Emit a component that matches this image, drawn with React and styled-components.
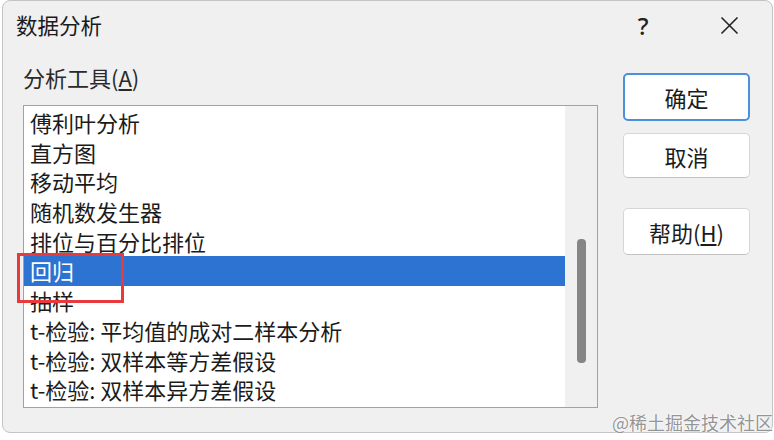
import React from 'react';
import styled, { createGlobalStyle } from 'styled-components';

const GlobalStyle = createGlobalStyle`
  body {
    margin: 0;
    background: #ffffff;
    font-family: "Noto Sans CJK SC", "Noto Sans", sans-serif;
  }
`;

const Window = styled.div`
  position: relative;
  box-sizing: border-box;
  width: 771px;
  height: 433px;
  margin-left: 2px;
  background-color: #f0f0f0;
  border: 1px solid #c4c4c4;
  border-radius: 8px;
  color: #1b1b1b;
`;

const TitleBar = styled.div`
  display: flex;
  align-items: center;
  justify-content: space-between;
  height: 48px;
`;

const Title = styled.div`
  padding-left: 13px;
  font-size: 21.5px;
  line-height: 48px;
`;

const TitleControls = styled.div`
  display: flex;
`;

const TitleButton = styled.div`
  display: flex;
  align-items: center;
  justify-content: center;
  width: 86px;
  height: 48px;
  font-family: "Noto Sans", sans-serif;
  font-size: 24px;
  font-weight: 500;
  color: #222;
`;

const Body = styled.div`
  display: flex;
  gap: 25px;
  padding: 0 21px 0 20px;
`;

const LeftColumn = styled.div`
  display: flex;
  flex-direction: column;
  width: 575px;
`;

const Label = styled.div`
  margin-top: 16px;
  margin-bottom: 16px;
  font-size: 22px;
  line-height: 24px;
  color: #2a2a2a;
`;

const Key = styled.span`
  text-decoration: underline;
  text-underline-offset: 2px;
`;

const ListBox = styled.div`
  display: flex;
  box-sizing: border-box;
  height: 303px;
  background-color: #ffffff;
  border: 1px solid #a2a2a2;
`;

const Items = styled.div`
  flex: 1;
  padding-top: 2px;
  overflow: hidden;
`;

const Item = styled.div`
  height: 29.7px;
  padding-left: 6px;
  font-size: 22px;
  line-height: 29.7px;
  white-space: nowrap;
  color: ${(props) => (props.selected ? '#ffffff' : '#1b1b1b')};
  background-color: ${(props) => (props.selected ? '#2c73d2' : 'transparent')};
`;

const ScrollTrack = styled.div`
  display: flex;
  justify-content: center;
  width: 32px;
  background-color: #f0f0f0;
`;

const ScrollThumb = styled.div`
  width: 9px;
  height: 124px;
  margin-top: 133px;
  border-radius: 4px;
  background-color: #858585;
`;

const ButtonColumn = styled.div`
  display: flex;
  flex-direction: column;
  width: 127px;
  padding-top: 24px;
`;

const Button = styled.div`
  display: flex;
  align-items: center;
  justify-content: center;
  box-sizing: border-box;
  height: ${(props) => props.h}px;
  margin-bottom: ${(props) => props.gap}px;
  background-color: #ffffff;
  border: ${(props) => (props.primary ? '2px solid #4a90dc' : '1px solid #d6d6d6')};
  border-bottom-color: ${(props) => (props.primary ? '#4a90dc' : '#c2c2c2')};
  border-radius: 5px;
  font-size: 22px;
  color: #1b1b1b;
`;

const Highlight = styled.div`
  position: absolute;
  left: 14px;
  top: 252px;
  width: 107px;
  height: 50px;
  box-sizing: border-box;
  border: 3px solid #e83a3c;
`;

const Watermark = styled.div`
  position: absolute;
  right: -1px;
  bottom: -1px;
  font-size: 18px;
  line-height: 22px;
  color: rgba(120, 120, 120, 0.8);
  text-shadow: 0 0 2px #ffffff, 0 0 1px #ffffff;
`;

const tools = [
  '傅利叶分析',
  '直方图',
  '移动平均',
  '随机数发生器',
  '排位与百分比排位',
  '回归',
  '抽样',
  't-检验: 平均值的成对二样本分析',
  't-检验: 双样本等方差假设',
  't-检验: 双样本异方差假设',
];

const CloseIcon = () => (
  <svg width="19" height="19" viewBox="0 0 19 19">
    <path d="M1.5 1.5 L17.5 17.5 M17.5 1.5 L1.5 17.5" stroke="#222" strokeWidth="1.6" fill="none" />
  </svg>
);

const App = () => (
  <>
    <GlobalStyle />
    <Window>
      <TitleBar>
        <Title>数据分析</Title>
        <TitleControls>
          <TitleButton>?</TitleButton>
          <TitleButton>
            <CloseIcon />
          </TitleButton>
        </TitleControls>
      </TitleBar>
      <Body>
        <LeftColumn>
          <Label>
            分析工具(<Key>A</Key>)
          </Label>
          <ListBox>
            <Items>
              {tools.map((name) => (
                <Item key={name} selected={name === '回归'}>
                  {name}
                </Item>
              ))}
            </Items>
            <ScrollTrack>
              <ScrollThumb />
            </ScrollTrack>
          </ListBox>
        </LeftColumn>
        <ButtonColumn>
          <Button primary h={48} gap={12}>确定</Button>
          <Button h={45} gap={30}>取消</Button>
          <Button h={47} gap={0}>
            帮助(<Key>H</Key>)
          </Button>
        </ButtonColumn>
      </Body>
      <Highlight />
      <Watermark>@稀土掘金技术社区</Watermark>
    </Window>
  </>
);

export default App;
